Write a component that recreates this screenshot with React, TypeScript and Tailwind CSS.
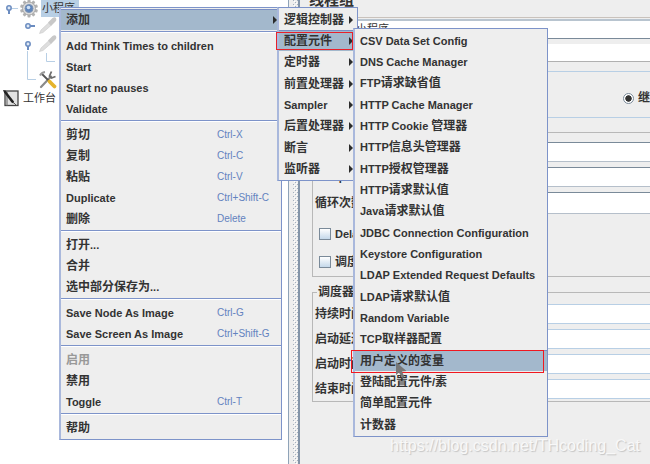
import clsx from 'clsx';

interface MenuEntry {
  label: string;
  shortcut?: string;
  submenu?: boolean;
  active?: boolean;
  disabled?: boolean;
}

const CONTEXT_GROUPS: MenuEntry[][] = [
  [{ label: '添加', submenu: true, active: true }],
  [
    { label: 'Add Think Times to children' },
    { label: 'Start' },
    { label: 'Start no pauses' },
    { label: 'Validate' },
  ],
  [
    { label: '剪切', shortcut: 'Ctrl-X' },
    { label: '复制', shortcut: 'Ctrl-C' },
    { label: '粘贴', shortcut: 'Ctrl-V' },
    { label: 'Duplicate', shortcut: 'Ctrl+Shift-C' },
    { label: '删除', shortcut: 'Delete' },
  ],
  [{ label: '打开...' }, { label: '合并' }, { label: '选中部分保存为...' }],
  [
    { label: 'Save Node As Image', shortcut: 'Ctrl-G' },
    { label: 'Save Screen As Image', shortcut: 'Ctrl+Shift-G' },
  ],
  [{ label: '启用', disabled: true }, { label: '禁用' }, { label: 'Toggle', shortcut: 'Ctrl-T' }],
  [{ label: '帮助' }],
];

const ADD_MENU: MenuEntry[] = [
  { label: '逻辑控制器', submenu: true },
  { label: '配置元件', submenu: true, active: true },
  { label: '定时器', submenu: true },
  { label: '前置处理器', submenu: true },
  { label: 'Sampler', submenu: true },
  { label: '后置处理器', submenu: true },
  { label: '断言', submenu: true },
  { label: '监听器', submenu: true },
];

const CONFIG_MENU: MenuEntry[] = [
  { label: 'CSV Data Set Config' },
  { label: 'DNS Cache Manager' },
  { label: 'FTP请求缺省值' },
  { label: 'HTTP Cache Manager' },
  { label: 'HTTP Cookie 管理器' },
  { label: 'HTTP信息头管理器' },
  { label: 'HTTP授权管理器' },
  { label: 'HTTP请求默认值' },
  { label: 'Java请求默认值' },
  { label: 'JDBC Connection Configuration' },
  { label: 'Keystore Configuration' },
  { label: 'LDAP Extended Request Defaults' },
  { label: 'LDAP请求默认值' },
  { label: 'Random Variable' },
  { label: 'TCP取样器配置' },
  { label: '用户定义的变量', active: true },
  { label: '登陆配置元件/素' },
  { label: '简单配置元件' },
  { label: '计数器' },
];

// Latin runs are set one step smaller than the Chinese around them
function Label({ text }: { text: string }) {
  const runs = text.match(/[\x20-\x7e]+|[^\x20-\x7e]+/g) ?? [];
  return (
    <span className="whitespace-pre">
      {runs.map((run, i) => (
        <span key={i} className={/^[\x20-\x7e]/.test(run) ? 'text-[11px]' : 'text-[12px]'}>
          {run}
        </span>
      ))}
    </span>
  );
}

function MenuItem({ item, className }: { item: MenuEntry; className?: string }) {
  return (
    <button
      type="button"
      role="menuitem"
      disabled={item.disabled}
      className={clsx(
        'flex h-[21px] w-full shrink-0 items-center justify-between pl-[5px] text-left text-[12px] leading-[18px] font-bold whitespace-nowrap',
        item.active && 'border-t border-[#7a8fc4] bg-[#a3b8cc]',
        item.disabled ? 'text-[#999999]' : 'text-[#333333]',
        className,
      )}
    >
      <Label text={item.label} />
      {item.shortcut && (
        <span className="w-[64px] text-[10px] font-normal text-[#6382bf]">{item.shortcut}</span>
      )}
      {item.submenu && (
        <svg className="mr-1 h-2 w-1" viewBox="0 0 4 8">
          <path d="M0 0L4 4L0 8Z" fill="#2b2b2b" />
        </svg>
      )}
    </button>
  );
}

const MENU_BOX = 'absolute flex flex-col border border-l-2 border-[#7d93c9] border-l-[#a9b8dc] bg-[#eeeeee] py-px';

function ContextMenu() {
  return (
    <div role="menu" className={clsx(MENU_BOX, 'top-[7px] left-[59px] w-[223px]')}>
      {CONTEXT_GROUPS.map((group, i) => (
        <div key={i}>
          {i > 0 && (
            <div className="h-[5px] pt-px">
              <div className="h-[2px] border-t border-[#7d93c9] bg-white" />
            </div>
          )}
          {group.map((item) => (
            <MenuItem key={item.label} item={item} />
          ))}
        </div>
      ))}
    </div>
  );
}

function SubMenu({ items, className }: { items: MenuEntry[]; className: string }) {
  return (
    <div role="menu" className={clsx(MENU_BOX, className)}>
      {items.map((item) => (
        <MenuItem key={item.label} item={item} className="nth-[3n]:h-[22px]" />
      ))}
    </div>
  );
}

function Handle({ x, open }: { x: number; open?: boolean }) {
  return (
    <g stroke="#6b8cc0" strokeWidth="1.5" fill="#dfe9f5">
      <path d={open ? `M${x} 11v4` : `M${x + 2} 9h5`} strokeWidth="2" />
      <circle cx={x} cy="9" r="2.2" />
    </g>
  );
}

function Dropper() {
  return (
    <g>
      <path d="M39.500 16.500L41 13L48.500 6L51 8.500L43 15.500Z" fill="#dedede" stroke="#c9c9c9" strokeWidth="0.600" />
      <path d="M48 5.500L52.500 1Q54.500 -0.500 56 1Q57 3 55.500 4.500L51 9Z" fill="#c8c8c8" />
    </g>
  );
}

const GEAR_TEETH = [0, 36, 72, 108, 144, 180, 216, 252, 288, 324];

function GearIcon() {
  return (
    <g>
      {GEAR_TEETH.map((deg) => (
        <rect key={deg} x="27.500" y="0.500" width="3" height="4" rx="0.800" fill="#b2b2b2" transform={`rotate(${deg} 29 9.500)`} />
      ))}
      <circle cx="29" cy="9.500" r="6.500" fill="#dadada" stroke="#a9a9a9" />
      <circle cx="29" cy="9.500" r="4" fill="#5f86bd" stroke="#7d93b3" />
      <circle cx="28.500" cy="8.500" r="1.800" fill="#cfe1f6" />
    </g>
  );
}

function Tree() {
  return (
    <div className="-mt-px flex flex-col text-[11px] text-[#333333]">
      <div className="flex h-[18px] items-center">
        <svg className="h-[18px] w-[41px] shrink-0 overflow-visible" viewBox="0 0 41 18">
          <path d="M12 9.500h6" stroke="#b8cfe5" />
          <Handle x={9} open />
          <GearIcon />
        </svg>
        <span className="h-[18px] bg-[#b8cfe5] pr-1 pl-px leading-[18px]">小程序</span>
      </div>
      <svg className="h-[18px] w-[60px] overflow-visible" viewBox="0 0 60 18">
        <Handle x={28} />
        <Dropper />
      </svg>
      <svg className="h-[18px] w-[60px] overflow-visible" viewBox="0 0 60 18">
        <Handle x={28} open />
        <Dropper />
      </svg>
      <svg className="h-[18px] w-[60px] overflow-visible" viewBox="0 0 60 18">
        <path d="M27.500 -2V18M46.500 0V8.500H55" fill="none" stroke="#b8cfe5" />
      </svg>
      <svg className="h-[18px] w-[60px] overflow-visible" viewBox="0 0 60 18">
        <path d="M27.500 0V8.500H36" fill="none" stroke="#b8cfe5" />
        <path d="M41 16L51 5.500" stroke="#8a8a8a" strokeWidth="2.200" strokeLinecap="round" />
        <path d="M51.500 0.500L49.500 5L51.500 7L55.500 5.500" fill="none" stroke="#6d6d6d" strokeWidth="1.800" />
        <path d="M42 3L49 10" stroke="#555555" strokeWidth="1.800" />
        <path d="M40 4.500Q41.500 1.500 45 1" fill="none" stroke="#9a9a9a" strokeWidth="2" />
        <path d="M49.500 10.500L54.500 15.500" stroke="#e5b42c" strokeWidth="3.800" strokeLinecap="round" />
      </svg>
      <div className="flex h-[18px] items-center">
        <svg className="h-[18px] w-[23px] shrink-0" viewBox="0 0 23 18">
          <rect x="5" y="2" width="13" height="14.500" fill="#e2e2e2" stroke="#444444" strokeWidth="1.300" />
          <path d="M7 2V16.500" stroke="#777777" strokeWidth="1.200" />
          <path d="M3 1L5.500 1.500L14 12.500L13.500 14.500L11.500 13.500L4 3.500Z" fill="#222222" />
          <path d="M13 13L16.500 16.500" stroke="#555555" />
        </svg>
        <span>工作台</span>
      </div>
    </div>
  );
}

interface FieldProps {
  id: string;
  label: string;
  blue?: boolean;
  tall?: boolean;
}

function Field({ id, label, blue, tall }: FieldProps) {
  return (
    <div className={clsx('flex', tall ? 'h-[22px]' : 'h-5')}>
      <label htmlFor={id} className="flex w-[200px] shrink-0 items-center leading-[18px] whitespace-nowrap">
        <Label text={label} />
      </label>
      <input
        id={id}
        type="text"
        className={clsx('min-w-0 flex-1 border bg-white', blue ? 'border-[#b8cfe5]' : 'border-[#7a8a99] border-b-[#b5bfca]')}
      />
    </div>
  );
}

function CheckRow({ label }: { label: string }) {
  return (
    <label className="flex h-7 items-center gap-1 pl-1 whitespace-nowrap">
      <input
        type="checkbox"
        className="h-3 w-3 shrink-0 appearance-none border border-[#7a8a99] bg-linear-to-b from-white to-[#c4d8ea]"
      />
      <Label text={label} />
    </label>
  );
}

function ThreadGroupPanel() {
  return (
    <section className="min-w-0 flex-1 overflow-hidden bg-[#eeeeee] text-[12px] font-bold text-[#333333]">
      <header className="flex h-[21px] flex-col border-b-2 border-[#b8c4cf]">
        <h1 className="-mt-2 h-[26px] shrink-0 border-b border-[#c9c2bc] pl-[9px] text-[15px] leading-[16px]">线程组</h1>
      </header>
      <div className="flex flex-col gap-[5px]">
        <div className="flex h-[18px]">
          <label htmlFor="name" className="w-[52px] shrink-0 pl-[5px] leading-[18px]">名称：</label>
          <input
            id="name"
            type="text"
            defaultValue="小程序"
            className="min-w-0 flex-1 border-b border-[#7a8a99] bg-white pl-1 text-[11px] font-normal"
          />
        </div>
        <div className="flex h-[18px]">
          <label htmlFor="comment" className="w-[52px] shrink-0 pl-[5px] leading-[18px]">注释：</label>
          <input id="comment" type="text" className="min-w-0 flex-1 border-b border-[#b0b0b0] bg-white" />
        </div>
      </div>

      <fieldset className="mt-px ml-[5px] border-y border-l border-[#b8cfe5]">
        <legend className="ml-1 h-4 leading-[16px]">在取样器错误后要执行的动作</legend>
        <label className="flex h-[38px] items-center gap-1 pl-[317px] whitespace-nowrap">
          <input
            type="radio"
            name="on-error"
            defaultChecked
            className="h-[11px] w-[11px] shrink-0 appearance-none rounded-full border border-[#7a8a99] bg-white bg-radial from-[#333333] from-45% to-white to-55%"
          />
          继续
        </label>
      </fieldset>

      <fieldset className="mt-[6px] ml-[12px] border-y border-l border-[#b8b8b8] pl-[2px]">
        <legend className="ml-[3px] h-4 leading-[16px]">线程属性</legend>
        <div className="flex flex-col gap-[5px] pt-[2px]">
          <Field id="threads" label="线程数：" />
          <Field id="ramp-up" label="Ramp-Up Period (in seconds)：" />
          <Field id="loops" label="循环次数" tall />
        </div>
        <div className="pt-[6px]">
          <CheckRow label="Delay Thread creation until needed" />
          <CheckRow label="调度器" />
        </div>
      </fieldset>

      <fieldset className="mt-[7px] ml-[12px] border-y border-l border-[#b8b8b8] pl-[2px]">
        <legend className="ml-[2px] h-4 px-px leading-[16px]">调度器配置</legend>
        <div className="flex flex-col gap-[5px] pt-1 pb-[2px]">
          <Field id="duration" label="持续时间（秒）" blue />
          <Field id="delay" label="启动延迟（秒）" blue />
          <Field id="start" label="启动时间" blue />
          <Field id="end" label="结束时间" blue />
        </div>
      </fieldset>
    </section>
  );
}

function App() {
  return (
    <div className="relative flex h-screen overflow-hidden bg-white font-['Liberation_Sans','Noto_Sans_CJK_SC',sans-serif]">
      <aside className="w-[289px] shrink-0 border-r border-[#8fa3b8]">
        <Tree />
      </aside>

      {/* split pane divider */}
      <div className="w-[11px] shrink-0 border-r-2 border-[#8394a8] bg-[#eeeeee] pl-1">
        <svg className="h-full w-[5px]">
          <defs>
            <pattern id="bumps" width="4" height="4" patternUnits="userSpaceOnUse">
              <path d="M0 0h1v1h-1zM2 2h1v1h-1z" fill="#a3afbd" />
              <path d="M1 1h1v1h-1zM3 3h1v1h-1z" fill="#ffffff" />
            </pattern>
          </defs>
          <rect width="100%" height="100%" fill="url(#bumps)" />
        </svg>
      </div>

      <ThreadGroupPanel />

      <ContextMenu />
      <SubMenu items={ADD_MENU} className="top-[7px] left-[277px] w-[81px]" />
      <SubMenu items={CONFIG_MENU} className="top-[28px] left-[353px] w-[195px]" />

      {/* callouts */}
      <div className="pointer-events-none absolute top-[32px] left-[276px] h-[18px] w-[77px] border border-[#e8202a]" />
      <div className="pointer-events-none absolute top-[350px] left-[351px] h-[23px] w-[193px] border border-[#f01820]" />

      <svg className="pointer-events-none absolute top-[362px] left-[396px] h-[18px] w-[12px]" viewBox="0 0 12 18">
        <path d="M0 0V13L3 10.500L6 16L8.500 15L6 9.500L10.500 9Z" fill="#777777" />
      </svg>

      <p className="pointer-events-none absolute right-[10px] bottom-[8px] text-[16px] leading-[20px] text-[#f8f8f8] [text-shadow:1px_1px_1px_#c4c4c4]">
        https://blog.csdn.net/THcoding_Cat
      </p>
    </div>
  );
}

export default App;
